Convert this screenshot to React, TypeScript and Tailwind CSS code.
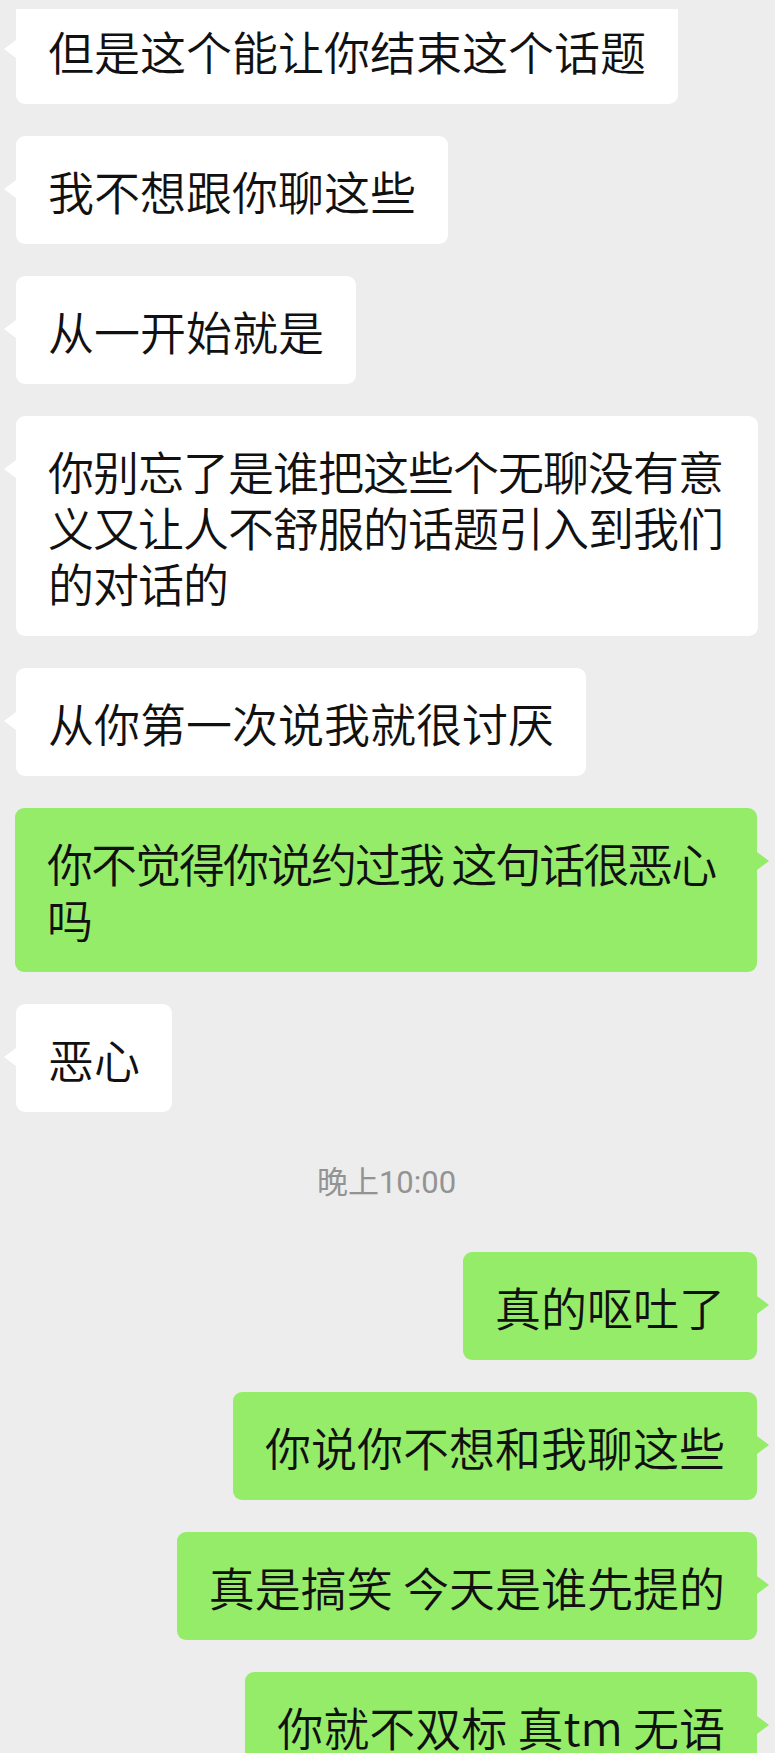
import clsx from 'clsx';

type Item =
    | { kind: 'msg'; side: 'left' | 'right'; text: string; extra?: string }
    | { kind: 'time'; text: string };

const items: Item[] = [
    { kind: 'msg', side: 'left', text: '但是这个能让你结束这个话题' },
    { kind: 'msg', side: 'left', text: '我不想跟你聊这些' },
    { kind: 'msg', side: 'left', text: '从一开始就是' },
    {
        kind: 'msg',
        side: 'left',
        text: '你别忘了是谁把这些个无聊没有意义又让人不舒服的话题引入到我们的对话的',
        extra: 'w-[742px] tracking-[-1px]',
    },
    { kind: 'msg', side: 'left', text: '从你第一次说我就很讨厌' },
    {
        kind: 'msg',
        side: 'right',
        text: '你不觉得你说约过我 这句话很恶心吗',
        extra: 'w-[742px] tracking-[-2px]',
    },
    { kind: 'msg', side: 'left', text: '恶心' },
    { kind: 'time', text: '晚上10:00' },
    { kind: 'msg', side: 'right', text: '真的呕吐了' },
    { kind: 'msg', side: 'right', text: '你说你不想和我聊这些' },
    { kind: 'msg', side: 'right', text: '真是搞笑 今天是谁先提的' },
    { kind: 'msg', side: 'right', text: '你就不双标 真tm 无语' },
];

function Bubble({ side, text, extra }: { side: 'left' | 'right'; text: string; extra?: string }) {
    const mine = side === 'right';
    return (
        <div
            className={clsx(
                "relative max-w-[742px] rounded-[9px] px-8 py-[26px] font-['Noto_Sans_CJK_SC',Roboto,sans-serif] text-[46px] font-[350] leading-[56px] text-[#111111] break-words",
                mine ? 'self-end bg-[#95ec69]' : 'self-start bg-white',
                extra
            )}
        >
            {/* tail */}
            {mine ? (
                <span className="absolute right-[-12px] top-[44px] h-0 w-0 border-y-[9px] border-l-[12px] border-y-transparent border-l-[#95ec69]" />
            ) : (
                <span className="absolute left-[-12px] top-[44px] h-0 w-0 border-y-[9px] border-r-[12px] border-y-transparent border-r-white" />
            )}
            {text}
        </div>
    );
}

function TimeStamp({ text }: { text: string }) {
    return (
        <div className="flex h-[76px] items-center justify-center text-[31px] leading-none text-[#939393]">
            {text}
        </div>
    );
}

export default function App() {
    return (
        <div className="flex h-[1753px] w-full flex-col overflow-hidden bg-[#ededed] font-['Roboto','Noto_Sans_CJK_SC',sans-serif]">
            {/* top edge strip */}
            <div className="h-[9px] shrink-0 bg-[#ededed]" />

            {/* Chat list */}
            <div className="flex-1 overflow-hidden">
                <div className="-mt-[13px] flex flex-col gap-8 pl-4 pr-[18px]">
                    {items.map((it, i) =>
                        it.kind === 'time' ? (
                            <TimeStamp key={i} text={it.text} />
                        ) : (
                            <Bubble key={i} side={it.side} text={it.text} extra={it.extra} />
                        )
                    )}
                </div>
            </div>
        </div>
    );
}
